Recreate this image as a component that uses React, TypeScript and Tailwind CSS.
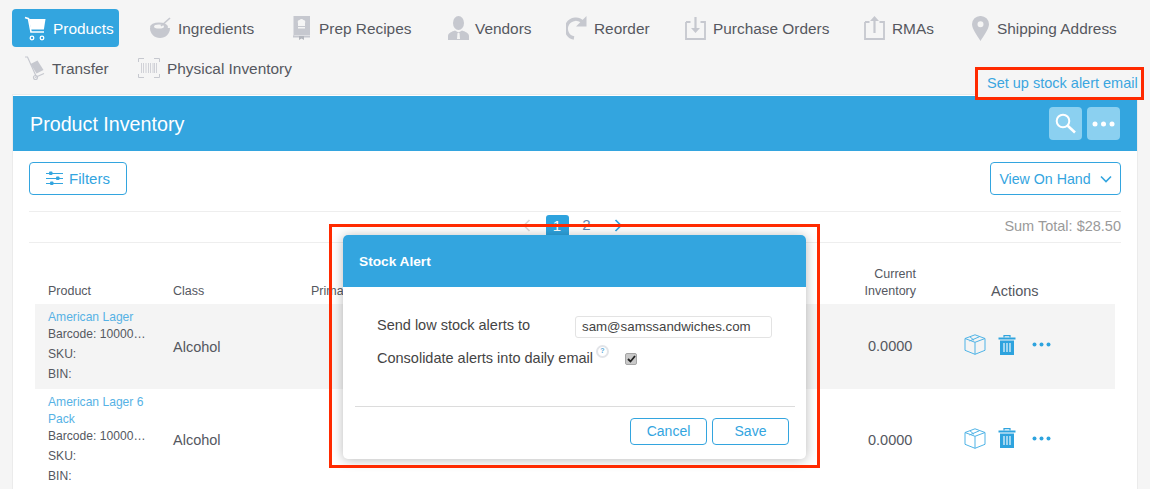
import React from "react";

const G = "#c6c8cf";

const Cart = () => (
  <svg width="22" height="26" viewBox="0 0 22 26" fill="none">
    <path d="M1 2.500l3.500 1.200L7 17h13" stroke="#fff" strokeWidth="1.600" />
    <path d="M5 4h16.500l-1.600 10.500H7z" fill="#fff" />
    <circle cx="8" cy="23" r="1.800" stroke="#fff" strokeWidth="1.300" />
    <circle cx="18" cy="23" r="1.800" stroke="#fff" strokeWidth="1.300" />
  </svg>
);
const Bowl = () => (
  <svg width="22" height="24" viewBox="0 0 22 24" fill="none">
    <path d="M1 12c0 6 4.500 10 10 10s10-4 10-10z" fill={G} />
    <ellipse cx="10" cy="11" rx="9" ry="4.500" fill={G} />
    <ellipse cx="10" cy="10.500" rx="5" ry="2" fill="#f5f5f5" />
    <path d="M12 10L21 2" stroke={G} strokeWidth="1.600" />
  </svg>
);
const Book = () => (
  <svg width="19" height="24" viewBox="0 0 19 24" fill="none">
    <path d="M1.500 0h16.500v19H3a1.500 1.500 0 0 0-1.500 1.500z" fill={G} />
    <rect x="1" y="19.500" width="17" height="2" fill={G} />
    <path d="M7 20h5v4l-2.500-1.500L7 24z" fill="#b3b6bd" />
    <path d="M6 7a2 2 0 0 1 1.500-3 2.500 2.500 0 0 1 4 0 2 2 0 0 1 1.500 3v3H6z" fill="#f5f5f5" />
    <rect x="6" y="11" width="7" height="1.500" fill="#f5f5f5" />
  </svg>
);
const Person = () => (
  <svg width="23" height="25" viewBox="0 0 23 25" fill="none">
    <ellipse cx="11.500" cy="7" rx="5.500" ry="7" fill={G} />
    <path d="M1 24v-4c0-3 4-4.500 7-5.500l3.500 2 3.500-2c3 1 7 2.500 7 5.500v4z" fill={G} />
    <path d="M10.500 17h2l.5 6h-3z" fill="#f5f5f5" />
  </svg>
);
const Reorder = () => (
  <svg width="21" height="24" viewBox="0 0 21 24" fill="none">
    <path d="M17 6.500A9.500 9.500 0 1 0 8 22" stroke={G} strokeWidth="3.400" />
    <path d="M20.500 0v10.500H10z" fill={G} />
  </svg>
);
const Tray = ({ up }: { up?: boolean }) => (
  <svg width="21" height="24" viewBox="0 0 21 24" fill="none">
    <path d="M1 6v17h19V6h-4.500M1 6h4.500" stroke={G} strokeWidth="1.800" />
    {up ? (
      <path d="M9.400 17V5H6l4.500-5 4.500 5h-3.400v12z" fill={G} />
    ) : (
      <path d="M9.400 1v11H6l4.500 5 4.500-5h-3.400V1z" fill={G} />
    )}
  </svg>
);
const Pin = () => (
  <svg width="17" height="25" viewBox="0 0 17 25" fill="none">
    <path fillRule="evenodd" d="M8.500 0A8.300 8.300 0 0 1 17 8.300C17 13 11.500 20 8.500 25 5.500 20 0 13 0 8.300A8.300 8.300 0 0 1 8.500 0zm0 5.300a3 3 0 1 0 0 6 3 3 0 0 0 0-6z" fill={G} />
  </svg>
);
const Truck = () => (
  <svg width="22" height="24" viewBox="0 0 22 24" fill="none">
    <path d="M1 1h2.500L12 20" stroke={G} strokeWidth="1.200" />
    <path d="M11 21.500l9-4" stroke={G} strokeWidth="1.200" />
    <circle cx="11.500" cy="21.500" r="2" stroke={G} strokeWidth="1.200" />
    <path d="M6.500 8l7-3.500 6 9.500-7 3.500z" fill={G} />
  </svg>
);
const Barcode = () => (
  <svg width="22" height="20" viewBox="0 0 22 20" fill="none">
    <path d="M.500 4V.500H6M16 .500h5.500V4M.500 16v3.500H6M16 19.500h5.500V16" stroke={G} strokeWidth="1" />
    <path d="M3.500 5v10M5.500 5v10M8 5v10M10.500 5v10M12.500 5v10M15 5v10M16.500 5v10M18.500 5v10" stroke={G} strokeWidth="0.800" />
  </svg>
);
const Sliders = () => (
  <svg width="17" height="15" viewBox="0 0 17 15" fill="none">
    <path d="M0 2.500h17M0 7.500h17M0 12.500h17" stroke="#33a5df" strokeWidth="1.200" />
    <rect x="3" y="0.500" width="3.500" height="3.500" rx="1" fill="#33a5df" />
    <rect x="10" y="5.500" width="3.500" height="3.500" rx="1" fill="#33a5df" />
    <rect x="4" y="10.500" width="3.500" height="3.500" rx="1" fill="#33a5df" />
  </svg>
);
const Search = () => (
  <svg width="21" height="21" viewBox="0 0 21 21" fill="none">
    <circle cx="8" cy="8" r="6.300" stroke="#fff" strokeWidth="2" />
    <path d="M12.700 12.700L20 19.500" stroke="#fff" strokeWidth="2.600" />
  </svg>
);
const Dots = ({ c }: { c: string }) => (
  <svg width="19" height="5" viewBox="0 0 19 5" fill={c}>
    <circle cx="2.500" cy="2.500" r="2" />
    <circle cx="9.500" cy="2.500" r="2" />
    <circle cx="16.500" cy="2.500" r="2" />
  </svg>
);
const BigDots = () => (
  <svg width="23" height="6" viewBox="0 0 23 6" fill="#fff">
    <circle cx="3" cy="3" r="2.500" />
    <circle cx="11.500" cy="3" r="2.500" />
    <circle cx="20" cy="3" r="2.500" />
  </svg>
);
const Box = () => (
  <svg width="22" height="21" viewBox="0 0 22 21" fill="none" stroke="#4fb3e6" strokeWidth="1">
    <path d="M1 4.500L11 .8l10 3.700v11.800L11 20.300 1 16.300z" />
    <path d="M1 4.500l10 3.800 10-3.800M11 8.300v12M5.500 7l10-4.300M6 2.800l4 3.500" />
  </svg>
);
const Trash = () => (
  <svg width="18" height="20" viewBox="0 0 18 20" fill="none">
    <path d="M6 2.500V.700h6v1.800" stroke="#2ea3de" strokeWidth="1.200" />
    <rect x="0.500" y="2.500" width="17" height="2" fill="#2ea3de" />
    <path d="M2 5.500h14V20H2z" fill="#2ea3de" />
    <path d="M6 8v9M9 8v9M12 8v9" stroke="#fff" strokeWidth="1.100" />
  </svg>
);
const Chevron = ({ left, c }: { left?: boolean; c: string }) => (
  <svg width="9" height="13" viewBox="0 0 9 13" fill="none">
    <path d={left ? "M7.500 1L2 6.500 7.500 12" : "M1.500 1L7 6.500 1.500 12"} stroke={c} strokeWidth="1.700" />
  </svg>
);

const NavItem = ({ icon, label, slot, width }: { icon: React.ReactNode; label: string; slot: string; width: string }) => (
  <div className={`flex items-center h-[38px] shrink-0 ${width}`}>
    <span className={`flex items-center shrink-0 ${slot}`}>{icon}</span>
    <span className="pt-[1px] text-[15.400px] text-[#55585f] whitespace-nowrap">{label}</span>
  </div>
);

const Row = ({ name, h }: { name: string[]; h: string }) => (
  <div className={`flex items-center ${h} pl-[13px]`}>
    <div className="w-[125px] shrink-0 pt-[1px] text-[12.100px] text-[#55585f]">
      {name.map((n) => (
        <div key={n} className="h-[17px] leading-[17px] text-[#56b2e5]">{n}</div>
      ))}
      <div className="h-[20px] leading-[17px] whitespace-nowrap">Barcode: 10000…</div>
      <div className="h-[20px] leading-[17px]">SKU:</div>
      <div className="h-[20px] leading-[17px]">BIN:</div>
    </div>
    <div className="w-[695px] shrink-0 pt-[2px] text-[14.500px] text-[#55585f]">Alcohol</div>
    <div className="w-[96px] shrink-0 pt-[1px] text-[14.500px] text-[#55585f]">0.0000</div>
    <div className="flex items-center -mt-[4px]">
      <Box />
      <span className="ml-[12px]"><Trash /></span>
      <span className="ml-[16px]"><Dots c="#2ea3de" /></span>
    </div>
  </div>
);

export default function App() {
  return (
    <div className="relative w-[1150px] h-[489px] overflow-hidden bg-[#f5f5f5] font-['Liberation_Sans',Arial,sans-serif]">
      <div className="h-[95px] pt-[9px] pl-[12px]">
        <div className="flex h-[38px]">
          <div className="flex items-center w-[107px] h-[38px] rounded-[4px] bg-[#33a5df] pl-[12px] mr-[30px] shrink-0">
            <span className="w-[29px] shrink-0 flex"><Cart /></span>
            <span className="pt-[1px] text-[15.400px] text-white">Products</span>
          </div>
          <NavItem icon={<Bowl />} label="Ingredients" slot="w-[29px]" width="w-[143px]" />
          <NavItem icon={<Book />} label="Prep Recipes" slot="w-[27px]" width="w-[155px]" />
          <NavItem icon={<Person />} label="Vendors" slot="w-[28px]" width="w-[119px]" />
          <NavItem icon={<Reorder />} label="Reorder" slot="w-[28px]" width="w-[119px]" />
          <NavItem icon={<Tray />} label="Purchase Orders" slot="w-[28px]" width="w-[179px]" />
          <NavItem icon={<Tray up />} label="RMAs" slot="w-[28px]" width="w-[108px]" />
          <NavItem icon={<Pin />} label="Shipping Address" slot="w-[25px]" width="w-[150px]" />
        </div>
        <div className="flex h-[38px] mt-[2px] pl-[12px]">
          <NavItem icon={<Truck />} label="Transfer" slot="w-[28px]" width="w-[114px]" />
          <NavItem icon={<Barcode />} label="Physical Inventory" slot="w-[29px]" width="w-[160px]" />
        </div>
      </div>

      <div className="mx-[13px] w-[1124px] h-[394px] bg-white border-t border-white shadow-[0_0_0_1px_#ebebeb]">
        <div className="flex items-center justify-between h-[55px] bg-[#33a5df] pl-[17px] pr-[17px]">
          <span className="pt-[2px] text-[19.700px] text-white">Product Inventory</span>
          <div className="flex gap-[5px]">
            <div className="flex items-center justify-center w-[33px] h-[33px] rounded-[4px] bg-[#8bd0f0]"><Search /></div>
            <div className="flex items-center justify-center w-[33px] h-[33px] rounded-[4px] bg-[#8bd0f0]"><BigDots /></div>
          </div>
        </div>

        <div className="px-[16px]">
          <div className="flex items-start justify-between h-[61px] pt-[11px] border-b border-[#eeeeee]">
            <div className="flex items-center justify-center gap-[6px] w-[98px] h-[33px] rounded-[4px] border border-[#33a5df] text-[15px] text-[#33a5df]">
              <Sliders />
              <span className="pt-[2px]">Filters</span>
            </div>
            <div className="flex items-center justify-center gap-[9px] w-[131px] h-[33px] rounded-[4px] border border-[#33a5df] text-[14.200px] text-[#33a5df]">
              <span className="pt-[2px]">View On Hand</span>
              <svg width="12" height="8" viewBox="0 0 12 8" fill="none"><path d="M1 1.500l5 5 5-5" stroke="#33a5df" strokeWidth="1.600" /></svg>
            </div>
          </div>
          <div className="grid grid-cols-[1fr_auto_1fr] items-start h-[31px] border-b border-[#eeeeee]">
            <div />
            <div className="flex items-center h-[20px] mt-[3px] -ml-[6px]">
              <Chevron left c="#d8d8d8" />
              <span className="w-[23px] h-[20px] ml-[15px] rounded-t-[3px] bg-[#2ea3de] text-center text-[15px] leading-[22px] text-white">1</span>
              <span className="w-[36px] text-center text-[15px] text-[#5b87b5]">2</span>
              <span className="ml-[9px]"><Chevron c="#2ea3de" /></span>
            </div>
            <div className="text-right text-[14.500px] leading-[28px] text-[#9a9a9a]">Sum Total: $28.50</div>
          </div>
        </div>

        <div className="mx-[22px]">
          <div className="h-[61px] text-[12.500px] text-[#55585f]">
            <div className="flex items-end h-[57px] pl-[13px] leading-[17px]">
              <div className="w-[125px]">Product</div>
              <div className="w-[138px]">Class</div>
              <div className="w-[495px]">Primary</div>
              <div className="w-[110px] text-right">Current<br />Inventory</div>
              <div className="ml-[75px] text-[14.500px]">Actions</div>
            </div>
          </div>
          <Row name={["American Lager"]} h="h-[85px] bg-[#f4f4f4]" />
          <Row name={["American Lager 6", "Pack"]} h="h-[102px]" />
        </div>
      </div>

      <div className="absolute left-[343px] top-[235px] w-[463px] h-[224px] rounded-[5px] bg-white shadow-[0_1px_12px_rgba(0,0,0,0.28)] overflow-hidden">
        <div className="flex items-center h-[52px] bg-[#33a5df] pl-[16px] pt-[2px] text-[13.700px] font-bold text-white">Stock Alert</div>
        <div className="px-[34px] pt-[29px] h-[119px] text-[14.500px] text-[#444]">
          <div className="flex items-center h-[22px]">
            <span className="w-[198px] -mt-[3px]">Send low stock alerts to</span>
            <div className="flex items-center w-[198px] h-[22px] ml-[1px] pl-[6px] rounded-[3px] border border-[#e3e3e3] text-[13.300px]">sam@samssandwiches.com</div>
          </div>
          <div className="flex items-center h-[22px] mt-[10px]">
            <span className="whitespace-nowrap">Consolidate alerts into daily email</span>
            <span className="ml-[3px] -mt-[16px] flex items-center justify-center w-[13px] h-[13px] rounded-full border-2 border-[#e2e4e8] text-[7px] font-bold text-[#5aa9d8]">?</span>
            <span className="ml-[16px] flex items-center justify-center w-[12px] h-[12px] rounded-[2px] bg-[#c9c9c9] border border-[#a5a5a5]">
              <svg width="9" height="8" viewBox="0 0 9 8" fill="none"><path d="M1 4l2.500 2.500L8 1" stroke="#222" strokeWidth="1.800" /></svg>
            </span>
          </div>
        </div>
        <div className="ml-[12px] mr-[11px] border-t border-[#dcdcdc]" />
        <div className="flex justify-end gap-[5px] pt-[11px] pr-[17px]">
          <div className="flex items-center justify-center w-[77px] h-[27px] rounded-[4px] border border-[#33a5df] text-[14px] text-[#33a5df]">Cancel</div>
          <div className="flex items-center justify-center w-[77px] h-[27px] rounded-[4px] border border-[#33a5df] text-[14px] text-[#33a5df]">Save</div>
        </div>
      </div>

      <div className="absolute left-[329px] top-[224px] w-[491px] h-[244px] border-[3px] border-[#ff2a00] pointer-events-none" />
      <div className="absolute left-[975px] top-[67px] w-[169px] h-[33px] border-[3px] border-[#ff2a00] flex items-center pl-[9px] pt-[1px] bg-[#f5f5f5]">
        <span className="text-[14.500px] text-[#3ba6e0] whitespace-nowrap">Set up stock alert email</span>
      </div>
    </div>
  );
}
